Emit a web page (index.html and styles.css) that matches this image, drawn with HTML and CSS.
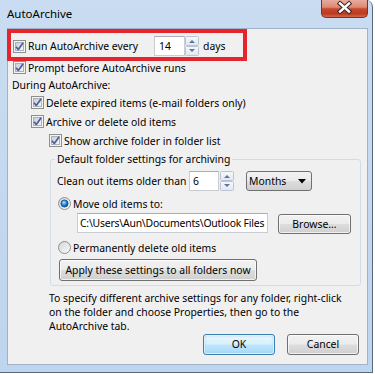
FILE: index.html
```html
<!DOCTYPE html>
<html lang="en">
<head>
<meta charset="utf-8">
<title>AutoArchive</title>
<link rel="stylesheet" href="styles.css">
</head>
<body>
<svg class="defs" width="0" height="0" aria-hidden="true">
  <defs>
    <linearGradient id="cbg" x1="0" y1="0" x2="1" y2="1">
      <stop offset="0" stop-color="#c6cad0"/>
      <stop offset="1" stop-color="#f8f8f8"/>
    </linearGradient>
    <linearGradient id="rbg" x1="0" y1="0" x2="1" y2="1">
      <stop offset="0" stop-color="#d2d4d8"/>
      <stop offset="1" stop-color="#fbfbfb"/>
    </linearGradient>
    <radialGradient id="dot" cx="0.42" cy="0.38" r="0.65">
      <stop offset="0" stop-color="#c4ecff"/>
      <stop offset="0.45" stop-color="#2b93e6"/>
      <stop offset="1" stop-color="#0b3f78"/>
    </radialGradient>
    <linearGradient id="sbg" x1="0" y1="0" x2="0" y2="1">
      <stop offset="0" stop-color="#f6f8fb"/>
      <stop offset="1" stop-color="#e2e7ef"/>
    </linearGradient>
    <symbol id="chk" viewBox="0 0 13 13">
      <rect x="0.5" y="0.5" width="12" height="12" fill="#f4f4f4" stroke="#8e8f8f"/>
      <rect x="2.5" y="2.5" width="8" height="8" fill="url(#cbg)" stroke="#aeb2b8"/>
      <path d="M2.9 6.7 L5.3 9.4 L10.1 2.7" fill="none" stroke="#4a5f9c" stroke-width="1.7" stroke-linejoin="round"/>
    </symbol>
    <symbol id="rad" viewBox="0 0 13 13">
      <circle cx="6.5" cy="6.5" r="6" fill="url(#rbg)" stroke="#8e8f8f"/>
    </symbol>
    <symbol id="radon" viewBox="0 0 13 13">
      <circle cx="6.5" cy="6.5" r="6" fill="url(#rbg)" stroke="#8e8f8f"/>
      <circle cx="6.5" cy="6.5" r="3.6" fill="url(#dot)" stroke="#1d4f7c" stroke-width="0.8"/>
    </symbol>
    <symbol id="spn" viewBox="0 0 14 20">
      <rect x="0.5" y="0.5" width="13" height="9" rx="1" fill="url(#sbg)" stroke="#bcc4d0"/>
      <rect x="0.5" y="10.5" width="13" height="9" rx="1" fill="url(#sbg)" stroke="#bcc4d0"/>
      <path d="M4 7 L7 4 L10 7 Z" fill="#5a74a6"/>
      <path d="M4 13 L10 13 L7 16 Z" fill="#5a74a6"/>
    </symbol>
  </defs>
</svg>

<div class="window">
  <div class="titlebar">
    <span class="title">AutoArchive</span>
    <div class="close">
      <svg width="47" height="18" viewBox="0 0 47 18" aria-hidden="true">
        <path d="M19 4.5 L28 12.5 M28 4.5 L19 12.5" stroke="#3b2320" stroke-width="4.4" stroke-linecap="square" fill="none"/>
        <path d="M19 4.5 L28 12.5 M28 4.5 L19 12.5" stroke="#ffffff" stroke-width="2.4" stroke-linecap="square" fill="none"/>
      </svg>
    </div>
  </div>

  <div class="client">
    <div class="annot"></div>

    <div class="row r1">
      <svg class="cb"><use href="#chk"/></svg>
      <span class="lbl run">Run AutoArchive every</span>
      <div class="num n14">14</div>
      <svg class="spin"><use href="#spn"/></svg>
      <span class="days">days</span>
    </div>

    <div class="row r19 prompt">
      <svg class="cb"><use href="#chk"/></svg>
      <span class="lbl">Prompt before AutoArchive runs</span>
    </div>

    <div class="row during">During AutoArchive:</div>

    <div class="row r19 l1">
      <svg class="cb"><use href="#chk"/></svg>
      <span class="lbl">Delete expired items (e-mail folders only)</span>
    </div>

    <div class="row r19 l1">
      <svg class="cb"><use href="#chk"/></svg>
      <span class="lbl">Archive or delete old items</span>
    </div>

    <div class="row r19 l2">
      <svg class="cb"><use href="#chk"/></svg>
      <span class="lbl">Show archive folder in folder list</span>
    </div>

    <fieldset class="group">
      <legend>Default folder settings for archiving</legend>

      <div class="row clean">
        <span class="cleanlbl">Clean out items older than</span>
        <div class="num n6">6</div>
        <svg class="spin"><use href="#spn"/></svg>
        <div class="select">
          <span>Months</span>
          <svg class="caret" width="8" height="5" viewBox="0 0 8 5"><path d="M0 0 L8 0 L4 4.5 Z" fill="#000"/></svg>
        </div>
      </div>

      <div class="row r19 move">
        <svg class="cb"><use href="#radon"/></svg>
        <span class="lbl">Move old items to:</span>
      </div>

      <div class="row pathrow">
        <div class="path">C:\Users\Aun\Documents\Outlook Files</div>
        <div class="btn browse">Browse...</div>
      </div>

      <div class="row r19 perm">
        <svg class="cb"><use href="#rad"/></svg>
        <span class="lbl">Permanently delete old items</span>
      </div>

      <div class="btn apply">Apply these settings to all folders now</div>
    </fieldset>

    <p class="note">To specify different archive settings for any folder, right-click<br>on the folder and choose Properties, then go to the<br>AutoArchive tab.</p>

    <div class="actions">
      <div class="btn ok">OK</div>
      <div class="btn">Cancel</div>
    </div>
  </div>
</div>
</body>
</html>
```

FILE: styles.css
```css
* { box-sizing: border-box; }

html, body { margin: 0; padding: 0; }

body {
  width: 375px;
  height: 374px;
  overflow: hidden;
  background: #ffffff;
  font-family: "Noto Sans", "Open Sans", sans-serif;
  font-size: 10.4px;
  color: #000;
}

.defs { display: block; width: 0; height: 0; }

.window {
  width: 373px;
  height: 373px;
  background: linear-gradient(#c9dcf1, #bfd5ed);
  border-right: 1px solid #56687f;
  border-bottom: 1px solid #56687f;
  border-top-right-radius: 7px;
  padding: 0 4px 7px 7px;
  display: flex;
  flex-direction: column;
}

.titlebar {
  flex: none;
  height: 28px;
  display: flex;
  align-items: flex-start;
}

.title {
  font-size: 11.5px;
  line-height: 15px;
  padding-top: 6px;
  color: #000;
}

.close {
  margin-left: auto;
  width: 47px;
  height: 18px;
  border: 1px solid #70342a;
  border-top: none;
  border-radius: 0 0 5px 5px;
  background: linear-gradient(#e9ab9c 0%, #dc8a75 42%, #c8492d 52%, #bd3a1f 80%, #d5664a 100%);
  overflow: hidden;
}

.close svg { display: block; margin: -1px 0 0 -1px; }

.client {
  flex: 1;
  position: relative;
  background: #f0f0f0;
  border: 1px solid #9fb2c7;
  padding: 7px 8px 0 5px;
  display: flex;
  flex-direction: column;
}

.annot {
  position: absolute;
  left: -1px;
  top: 0;
  width: 240px;
  height: 32px;
  border: 4px solid #e5242b;
}

.row {
  display: flex;
  align-items: center;
  flex: none;
  line-height: 14px;
  white-space: nowrap;
}

.cb { width: 13px; height: 13px; flex: none; display: block; }

.lbl { margin-left: 2px; }

.r1 { height: 20px; }
.r1 .run { width: 126px; }

.r19 { height: 19px; }
.prompt { margin-top: 2px; }
.during { height: 16px; margin-left: -1px; }
.l1 { padding-left: 18px; }
.l2 { padding-left: 36px; }

.num {
  height: 20px;
  background: #fff;
  border: 1px solid #c9ccd2;
  border-top-color: #abadb3;
  line-height: 18px;
}
.n14 { width: 31px; padding-left: 4px; }
.n6 { width: 30px; padding-left: 3px; }

.spin { width: 14px; height: 20px; display: block; flex: none; }
.days { margin-left: 4px; }

.group {
  margin: 2px 0 0 37px;
  width: 311px;
  min-width: 0;
  border: 1px solid #d3dce4;
  border-radius: 3px;
  padding: 5px 0 4px 7px;
}

.group legend {
  padding: 0 2px;
  margin-left: -3px;
  line-height: 14px;
}

.clean { height: 20px; }
.cleanlbl { width: 132px; margin-left: -1px; }
.clean .spin { margin-left: 1px; }

.select {
  margin-left: 12px;
  width: 66px;
  height: 20px;
  border: 1px solid #707070;
  border-radius: 3px;
  background: linear-gradient(#f2f2f2 0%, #ebebeb 48%, #dddddd 52%, #cfcfcf 100%);
  display: flex;
  align-items: center;
  padding-left: 2px;
  line-height: 14px;
}

.caret { margin-left: auto; margin-right: 5px; display: block; }

.move { margin-top: 3px; }

.pathrow { height: 21px; align-items: flex-start; }

.path {
  margin-left: 19px;
  width: 191px;
  height: 20px;
  background: #fff;
  border: 1px solid #c9ccd2;
  border-top-color: #abadb3;
  padding-left: 2px;
  line-height: 18px;
  letter-spacing: -0.2px;
  overflow: hidden;
  white-space: nowrap;
}

.btn {
  height: 21px;
  border: 1px solid #707070;
  border-radius: 3px;
  background: linear-gradient(#f2f2f2 0%, #ebebeb 48%, #dddddd 52%, #cfcfcf 100%);
  text-align: center;
  line-height: 19px;
  white-space: nowrap;
  box-shadow: inset 0 0 0 1px rgba(255, 255, 255, 0.7);
}

.browse { margin: 1px 0 0 10px; width: 73px; height: 20px; line-height: 18px; }

.perm { margin-top: 4px; }

.apply {
  margin: 2px 0 0 1px;
  width: 198px;
  height: 22px;
  line-height: 20px;
}

.note {
  margin: 5px 0 0 36px;
  line-height: 14px;
  white-space: nowrap;
}

.actions {
  display: flex;
  justify-content: flex-end;
  gap: 12px;
  margin-top: 1px;
}

.actions .btn { width: 72px; }

.btn.ok {
  border-color: #3c7fb1;
  background: linear-gradient(#eaf6fd 0%, #d9f0fc 48%, #bee6fd 52%, #a7d9f5 100%);
  box-shadow: inset 0 0 0 1px rgba(255, 255, 255, 0.6), inset 0 0 2px 1px #9fd4f5;
}
```
